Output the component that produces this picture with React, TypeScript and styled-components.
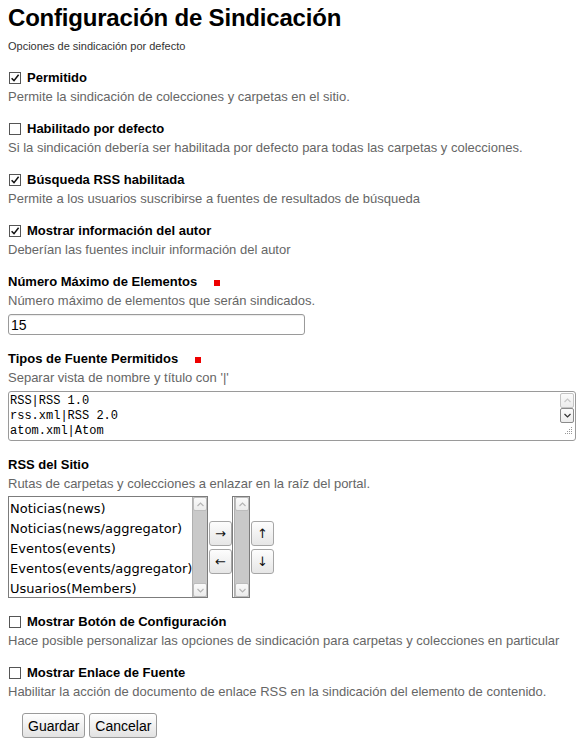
import React from "react";
import styled, { createGlobalStyle } from "styled-components";

const GlobalStyle = createGlobalStyle`
  html, body { margin: 0; padding: 0; background: #fff; }
  body { font-family: "Liberation Sans", Arial, sans-serif; color: #000; }
  * { box-sizing: border-box; }
`;

const Page = styled.div`
  padding: 4px 8px 8px 8px;
  width: 584px;
`;

const Title = styled.h1`
  margin: 0;
  font-size: 24px;
  line-height: 28px;
  font-weight: bold;
  letter-spacing: -0.2px;
`;

const Subtitle = styled.div`
  margin-top: 7px;
  font-size: 11px;
  line-height: 15px;
  color: #333;
`;

const Form = styled.div`
  margin-top: 15px;
  display: flex;
  flex-direction: column;
  gap: 15px;
`;

const Field = styled.div`
  display: flex;
  flex-direction: column;
`;

const LabelRow = styled.div`
  display: flex;
  align-items: center;
  height: 17px;
  font-size: 13px;
  font-weight: bold;
`;

const Box = styled.span`
  width: 12px;
  height: 12px;
  border: 1px solid #555;
  background: #fff;
  margin: 0 6px 0 1px;
  display: inline-flex;
  align-items: center;
  justify-content: center;
`;

const Required = styled.span`
  width: 6px;
  height: 6px;
  background: #e00;
  margin-left: 17px;
  margin-top: 3px;
`;

const Help = styled.div`
  margin-top: 2px;
  font-size: 13px;
  line-height: 17px;
  color: #666;
`;

const Control = styled.div`
  margin-top: 5px;
  display: flex;
  align-items: center;
`;

const TextInput = styled.input`
  width: 297px;
  height: 21px;
  border: 1px solid #9a9a9a;
  border-radius: 3px;
  padding: 0 2px;
  font-family: "Liberation Sans", Arial, sans-serif;
  font-size: 14px;
  color: #000;
  outline: none;
  box-shadow: inset 0 1px 1px rgba(0, 0, 0, 0.08);
`;

const AreaFrame = styled.div`
  width: 568px;
  height: 50px;
  border: 1px solid #9a9a9a;
  border-radius: 3px;
  display: flex;
  background: #fff;
`;

const Area = styled.textarea`
  flex: 1;
  border: none;
  resize: none;
  outline: none;
  overflow: hidden;
  padding: 2px 1px 0 1px;
  margin: 0;
  font-family: "Liberation Mono", "Courier New", monospace;
  font-size: 12px;
  line-height: 15px;
  color: #000;
  background: transparent;
`;

const AreaBar = styled.div`
  width: 15px;
  display: flex;
  flex-direction: column;
  padding: 1px 1px 1px 0;
  position: relative;
`;

const ArrowBtn = styled.div<{ $active?: boolean }>`
  height: 15px;
  border: 1px solid ${(p) => (p.$active ? "#8a8a8a" : "#c4c4c4")};
  border-radius: 2px;
  background: linear-gradient(#fbfbfb, #ececec);
  display: flex;
  align-items: center;
  justify-content: center;
`;

const Grip = styled.div`
  position: absolute;
  right: 2px;
  bottom: 2px;
`;

const ListRow = styled.div`
  margin-top: 4px;
  display: flex;
  align-items: center;
`;

const ListBox = styled.div<{ $w: number }>`
  width: ${(p) => p.$w}px;
  height: 102px;
  border: 1px solid #7c7c7c;
  background: #fff;
  display: flex;
`;

const ListItems = styled.div`
  flex: 1;
  overflow: hidden;
  padding: 2px 0 0 1px;
  font-family: "DejaVu Sans", sans-serif;
  font-size: 13px;
  line-height: 20px;
  white-space: nowrap;
`;

const Track = styled.div`
  width: 15px;
  flex: none;
  display: flex;
  flex-direction: column;
  justify-content: space-between;
  background: #c9c9c9;
  border-left: 1px solid #b0b0b0;
`;

const TrackBtn = styled.div`
  height: 14px;
  background: linear-gradient(#fafafa, #ececec);
  border: 1px solid #bcbcbc;
  border-radius: 2px;
  display: flex;
  align-items: center;
  justify-content: center;
`;

const BtnCol = styled.div`
  display: flex;
  flex-direction: column;
  gap: 3px;
  margin: 0 0 0 1px;
`;

const SmallBtn = styled.button`
  width: 23px;
  height: 25px;
  padding: 0;
  border: 1px solid #a6a6a6;
  border-radius: 3px;
  background: linear-gradient(#fdfdfd, #e6e6e6);
  font-family: "DejaVu Sans", sans-serif;
  font-size: 13px;
  color: #111;
  display: flex;
  align-items: center;
  justify-content: center;
`;

const Actions = styled.div`
  margin-top: -2px;
  padding-left: 14px;
  display: flex;
  gap: 4px;
`;

const ActionBtn = styled.button`
  height: 25px;
  padding: 0 5px;
  border: 1px solid #9a9a9a;
  border-radius: 3px;
  background: linear-gradient(#ffffff, #e2e2e2);
  font-family: "Liberation Sans", Arial, sans-serif;
  font-size: 14px;
  color: #000;
`;

const Check = ({ on }: { on: boolean }) => (
  <Box>
    {on && (
      <svg width="10" height="10" viewBox="0 0 10 10">
        <path d="M1.6 5.2 L4 7.6 L8.6 1.8" fill="none" stroke="#111" strokeWidth="1.5" />
      </svg>
    )}
  </Box>
);

const Chevron = ({ up, color = "#b5b5b5" }: { up?: boolean; color?: string }) => (
  <svg width="7" height="5" viewBox="0 0 7 5">
    <path
      d={up ? "M0.5 4 L3.5 1 L6.5 4" : "M0.5 1 L3.5 4 L6.5 1"}
      fill="none"
      stroke={color}
      strokeWidth="1.2"
    />
  </svg>
);

const ScrollBar = () => (
  <Track>
    <TrackBtn>
      <Chevron up />
    </TrackBtn>
    <TrackBtn>
      <Chevron />
    </TrackBtn>
  </Track>
);

const CheckField = ({ on, label, help }: { on: boolean; label: string; help: string }) => (
  <Field>
    <LabelRow>
      <Check on={on} />
      {label}
    </LabelRow>
    <Help>{help}</Help>
  </Field>
);

export default function App() {
  const sources = [
    "Noticias(news)",
    "Noticias(news/aggregator)",
    "Eventos(events)",
    "Eventos(events/aggregator)",
    "Usuarios(Members)",
  ];
  return (
    <Page>
      <GlobalStyle />
      <Title>Configuración de Sindicación</Title>
      <Subtitle>Opciones de sindicación por defecto</Subtitle>
      <Form>
        <CheckField on label="Permitido" help="Permite la sindicación de colecciones y carpetas en el sitio." />
        <CheckField
          on={false}
          label="Habilitado por defecto"
          help="Si la sindicación debería ser habilitada por defecto para todas las carpetas y colecciones."
        />
        <CheckField
          on
          label="Búsqueda RSS habilitada"
          help="Permite a los usuarios suscribirse a fuentes de resultados de búsqueda"
        />
        <CheckField
          on
          label="Mostrar información del autor"
          help="Deberían las fuentes incluir información del autor"
        />
        <Field>
          <LabelRow>
            Número Máximo de Elementos
            <Required />
          </LabelRow>
          <Help>Número máximo de elementos que serán sindicados.</Help>
          <Control>
            <TextInput defaultValue="15" />
          </Control>
        </Field>
        <Field>
          <LabelRow>
            Tipos de Fuente Permitidos
            <Required />
          </LabelRow>
          <Help>Separar vista de nombre y título con '|'</Help>
          <Control>
            <AreaFrame>
              <Area readOnly defaultValue={"RSS|RSS 1.0\nrss.xml|RSS 2.0\natom.xml|Atom"} />
              <AreaBar>
                <ArrowBtn>
                  <Chevron up color="#c8c8c8" />
                </ArrowBtn>
                <ArrowBtn $active>
                  <Chevron color="#333" />
                </ArrowBtn>
                <Grip>
                  <svg width="8" height="8" viewBox="0 0 8 8">
                    {[
                      [6, 1],
                      [4, 3],
                      [6, 3],
                      [2, 5],
                      [4, 5],
                      [6, 5],
                      [0, 7],
                      [2, 7],
                      [4, 7],
                      [6, 7],
                    ].map(([x, y], i) => (
                      <rect key={i} x={x} y={y} width="1" height="1" fill="#999" />
                    ))}
                  </svg>
                </Grip>
              </AreaBar>
            </AreaFrame>
          </Control>
        </Field>
        <Field>
          <LabelRow>RSS del Sitio</LabelRow>
          <Help>Rutas de carpetas y colecciones a enlazar en la raíz del portal.</Help>
          <ListRow>
            <ListBox $w={200}>
              <ListItems>
                {sources.map((s) => (
                  <div key={s}>{s}</div>
                ))}
              </ListItems>
              <ScrollBar />
            </ListBox>
            <BtnCol>
              <SmallBtn>→</SmallBtn>
              <SmallBtn>←</SmallBtn>
            </BtnCol>
            <ListBox $w={18}>
              <ListItems />
              <ScrollBar />
            </ListBox>
            <BtnCol>
              <SmallBtn>↑</SmallBtn>
              <SmallBtn>↓</SmallBtn>
            </BtnCol>
          </ListRow>
        </Field>
        <CheckField
          on={false}
          label="Mostrar Botón de Configuración"
          help="Hace posible personalizar las opciones de sindicación para carpetas y colecciones en particular"
        />
        <CheckField
          on={false}
          label="Mostrar Enlace de Fuente"
          help="Habilitar la acción de documento de enlace RSS en la sindicación del elemento de contenido."
        />
        <Actions>
          <ActionBtn>Guardar</ActionBtn>
          <ActionBtn>Cancelar</ActionBtn>
        </Actions>
      </Form>
    </Page>
  );
}
